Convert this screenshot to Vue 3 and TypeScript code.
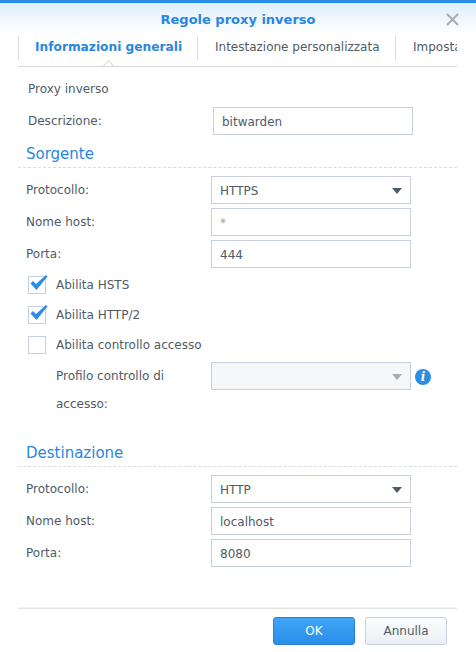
<script setup lang="ts">
const sourceRows = [
  { label: 'Protocollo:', value: 'HTTPS', select: true },
  { label: 'Nome host:', value: '*', muted: true },
  { label: 'Porta:', value: '444' },
]
const destRows = [
  { label: 'Protocollo:', value: 'HTTP', select: true },
  { label: 'Nome host:', value: 'localhost' },
  { label: 'Porta:', value: '8080' },
]
const checks = [
  { label: 'Abilita HSTS', on: true },
  { label: 'Abilita HTTP/2', on: true },
  { label: 'Abilita controllo accesso', on: false },
]
</script>

<template>
  <div class="dialog">
    <header class="head">
      <h1 class="title">Regole proxy inverso</h1>
      <svg class="close" width="13" height="13" viewBox="0 0 13 13"><path d="M1 1l11 11M12 1L1 12" stroke="#a6adb3" stroke-width="2" fill="none" /></svg>
    </header>
    <nav class="tabs">
      <div class="tab active">Informazioni generali</div>
      <div class="tab second">Intestazione personalizzata</div>
      <div class="tab third">Imposta</div>
      <span class="notch"></span>
    </nav>
    <main class="body">
      <div class="intro">Proxy inverso</div>
      <div class="desc-row">
        <span class="label desc-label">Descrizione:</span>
        <div class="field">bitwarden</div>
      </div>
      <h2 class="section">Sorgente</h2>
      <div class="rows">
        <div v-for="r in sourceRows" :key="r.label" class="row">
          <span class="label">{{ r.label }}</span>
          <div class="field" :class="{ muted: r.muted }">
            {{ r.value }}
            <span v-if="r.select" class="caret"></span>
          </div>
        </div>
      </div>
      <div class="checks">
        <div v-for="c in checks" :key="c.label" class="check">
          <span class="box">
            <svg v-if="c.on" class="tick" width="20" height="18" viewBox="0 0 20 18"><path d="M1.500 9.500l2.500-2.500 3 3L17 1l1.500 1.500L7.500 16z" fill="#2a8ee8" /></svg>
          </span>
          <span>{{ c.label }}</span>
        </div>
      </div>
      <div class="profile">
        <span class="profile-label">Profilo controllo di accesso:</span>
        <div class="field disabled"><span class="caret light"></span></div>
        <span class="info">i</span>
      </div>
      <h2 class="section dest">Destinazione</h2>
      <div class="rows">
        <div v-for="r in destRows" :key="r.label" class="row">
          <span class="label">{{ r.label }}</span>
          <div class="field">
            {{ r.value }}
            <span v-if="r.select" class="caret"></span>
          </div>
        </div>
      </div>
    </main>
    <footer class="foot">
      <button class="btn primary">OK</button>
      <button class="btn">Annulla</button>
    </footer>
  </div>
</template>

<style>
html, body { margin: 0; background: #fff; }
</style>

<style scoped>
.dialog {
  position: relative;
  width: 476px;
  height: 652px;
  box-sizing: border-box;
  border-top: 3px solid #2a8ee8;
  font-family: "DejaVu Sans", Verdana, sans-serif;
  font-size: 12px;
  color: #4f5b66;
  background: #fff;
  overflow: hidden;
}
.head {
  position: relative;
  height: 30px;
  box-sizing: border-box;
  padding-top: 2px;
  display: flex;
  align-items: center;
  justify-content: center;
  background: linear-gradient(#dceefb, #ffffff);
}
.title {
  margin: 0;
  font-size: 13px;
  font-weight: 700;
  color: #2a86e0;
}
.close { position: absolute; left: 446px; top: 10px; }
.tabs {
  position: relative;
  display: flex;
  margin: 3px 19px 0 18px;
  height: 30px;
  overflow: hidden;
  border-bottom: 1px solid #d4d8dc;
}
.tab {
  height: 24px;
  line-height: 23px;
  border-left: 1px solid #d8e0e8;
  box-sizing: border-box;
  white-space: nowrap;
  flex: none;
}
.tab.active {
  width: 179px;
  padding-left: 16px;
  font-weight: 700;
  font-size: 12.2px;
  color: #2a86e0;
}
.tab.second { width: 198px; padding-left: 17px; }
.tab.third { padding-left: 17px; }
.notch {
  position: absolute;
  left: 86px;
  top: 26px;
  width: 8px;
  height: 8px;
  background: #fff;
  border-left: 1px solid #d4d8dc;
  border-top: 1px solid #d4d8dc;
  transform: rotate(45deg);
}
.body { padding: 0 19px 0 18px; }
.intro { margin: 12px 0 0 10px; height: 18px; line-height: 20px; }
.desc-row { display: flex; align-items: center; margin-top: 10px; padding-left: 10px; }
.desc-label { width: 185px; }
.field {
  position: relative;
  box-sizing: border-box;
  width: 200px;
  height: 28px;
  line-height: 28px;
  padding-left: 8px;
  border: 1px solid #c6d0de;
  background: #fff;
}
.section {
  margin: 8px 0 0;
  padding: 0 0 2px 8px;
  height: 22px;
  font-size: 15px;
  font-weight: 400;
  line-height: 23px;
  color: #2a86e0;
  border-bottom: 1px dashed #d4dde6;
}
.section.dest { margin-top: 24px; }
.rows { display: flex; flex-direction: column; gap: 4px; margin-top: 8px; }
.row { display: flex; align-items: center; padding-left: 8px; }
.label { width: 185px; }
.muted { color: #9aa5b0; }
.caret {
  position: absolute;
  right: 8px;
  top: 11px;
  width: 0;
  height: 0;
  border-left: 5px solid transparent;
  border-right: 5px solid transparent;
  border-top: 6px solid #4f5b66;
}
.caret.light { border-top-color: #a5acb3; }
.checks { display: flex; flex-direction: column; gap: 12px; margin-top: 8px; padding-left: 10px; }
.check { display: flex; align-items: center; height: 18px; gap: 10px; }
.box {
  position: relative;
  box-sizing: border-box;
  width: 18px;
  height: 18px;
  border: 1px solid #c6d0de;
  flex: none;
}
.tick { position: absolute; left: 0; top: -3px; }
.profile { position: relative; display: flex; margin-top: 8px; padding-left: 38px; }
.profile-label { width: 155px; line-height: 28px; }
.field.disabled { background: #f5f7f9; }
.info {
  width: 16px;
  height: 16px;
  margin: 7px 0 0 4px;
  border-radius: 50%;
  background: #2a8ee8;
  color: #fff;
  font: italic 700 12px/16px "DejaVu Serif", serif;
  text-align: center;
}
.foot {
  position: absolute;
  left: 18px;
  right: 19px;
  top: 605px;
  display: flex;
  justify-content: flex-end;
  gap: 10px;
  padding: 8px 10px 0 0;
  border-top: 1px solid #e2e4e6;
  box-shadow: 0 -1px 0 #f1f2f3;
}
.btn {
  box-sizing: border-box;
  width: 82px;
  height: 28px;
  padding: 0;
  border: 1px solid #c6d0de;
  border-radius: 3px;
  background: linear-gradient(#fbfcfd, #eaf0f5);
  color: #4f5b66;
  font: 12px "DejaVu Sans", Verdana, sans-serif;
}
.btn.primary {
  border-color: #2a80d8;
  background: linear-gradient(#3ea6f8, #2a8ee8);
  color: #fff;
}
</style>
